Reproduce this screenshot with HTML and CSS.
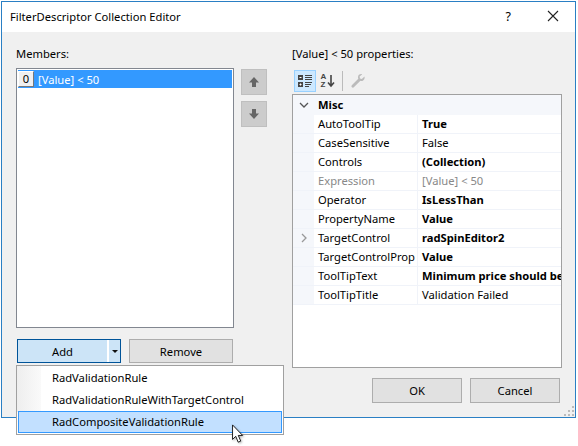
FILE: index.html
```html
<!DOCTYPE html>
<html>
<head>
  <title>FilterDescriptor Collection Editor</title>
  <link rel="stylesheet" href="styles.css">
</head>
<body>
  <div class="window">
    <div class="titlebar">
      <span class="title">FilterDescriptor Collection Editor</span>
      <span class="help">?</span>
      <svg class="close" width="12" height="12" viewBox="0 0 12 12"><path d="M1 1L11 11M11 1L1 11" stroke="#222" stroke-width="1.1" fill="none"/></svg>
    </div>
    <div class="content">
      <div class="left">
        <div class="caption">Members:</div>
        <div class="members-row">
          <div class="list">
            <div class="list-item"><span class="index">0</span><span>[Value] &lt; 50</span></div>
          </div>
          <div class="arrows">
            <button class="arrow"><svg width="12" height="12" viewBox="0 0 12 12"><path d="M6 1L11 6.5H8V11H4V6.5H1Z" fill="#666"/></svg></button>
            <button class="arrow"><svg width="12" height="12" viewBox="0 0 12 12"><path d="M4 1H8V5.5H11L6 11L1 5.5H4Z" fill="#666"/></svg></button>
          </div>
        </div>
        <div class="list-buttons">
          <div class="add-wrap">
            <button class="add">
              <span class="add-label">Add</span>
              <span class="add-split"></span>
              <span class="add-caret"></span>
            </button>
            <div class="menu">
              <div class="menu-item">RadValidationRule</div>
              <div class="menu-item">RadValidationRuleWithTargetControl</div>
              <div class="menu-item active">RadCompositeValidationRule</div>
              <svg class="cursor" width="14" height="20" viewBox="0 0 15 22"><path d="M1.5 1V17L5 13.5L7.7 20L10.5 18.8L7.8 12.6H12.6Z" fill="#fff" stroke="#111" stroke-width="1"/></svg>
            </div>
          </div>
          <button class="btn remove">Remove</button>
        </div>
      </div>
      <div class="right">
        <div class="caption">[Value] &lt; 50 properties:</div>
        <div class="toolbar">
          <span class="tool on">
            <svg width="16" height="16" viewBox="0 0 16 16">
              <rect x="1" y="2" width="5" height="5" fill="#444"/><rect x="2.5" y="4" width="2" height="1" fill="#fff"/>
              <rect x="1" y="9" width="5" height="5" fill="#444"/><rect x="2.5" y="11" width="2" height="1" fill="#fff"/><rect x="3" y="10.5" width="1" height="2" fill="#fff"/>
              <path d="M8 2.5H15M8 4.5H15M8 6.5H15M8 9.5H15M8 11.5H14M8 13.5H12" stroke="#444" stroke-width="1"/>
            </svg>
          </span>
          <span class="tool">
            <span class="az"><span>A</span><span>Z</span></span>
            <svg width="8" height="14" viewBox="0 0 8 14"><path d="M4 1V12M1 8.5L4 12L7 8.5" stroke="#444" stroke-width="1.6" fill="none"/></svg>
          </span>
          <span class="tool-sep"></span>
          <span class="tool">
            <svg width="16" height="16" viewBox="0 0 16 16"><path d="M14.5 3.5L11.8 6L10 5.5L9.6 3.6L12.2 1.2C10.2 .6 8 2 8 4.2C8 4.8 8.1 5.3 8.3 5.7L2 12C1.2 12.9 1.3 13.8 1.9 14.3C2.5 14.9 3.4 14.8 4.1 14.1L10.4 7.8C12.6 8.7 15.2 6.8 14.5 3.5Z" fill="#bbb"/></svg>
          </span>
        </div>
        <div class="grid">
          <div class="row category"><span class="gutter"><svg width="10" height="6" viewBox="0 0 10 6"><path d="M1 1L5 5L9 1" stroke="#555" stroke-width="1.3" fill="none"/></svg></span><span class="cat-name">Misc</span></div>
          <div class="row"><span class="gutter"></span><span class="name">AutoToolTip</span><span class="value bold">True</span></div>
          <div class="row"><span class="gutter"></span><span class="name">CaseSensitive</span><span class="value">False</span></div>
          <div class="row"><span class="gutter"></span><span class="name">Controls</span><span class="value bold">(Collection)</span></div>
          <div class="row disabled"><span class="gutter"></span><span class="name">Expression</span><span class="value">[Value] &lt; 50</span></div>
          <div class="row"><span class="gutter"></span><span class="name">Operator</span><span class="value bold">IsLessThan</span></div>
          <div class="row"><span class="gutter"></span><span class="name">PropertyName</span><span class="value bold">Value</span></div>
          <div class="row"><span class="gutter"><svg width="6" height="10" viewBox="0 0 6 10"><path d="M1 1L5 5L1 9" stroke="#999" stroke-width="1.3" fill="none"/></svg></span><span class="name">TargetControl</span><span class="value bold">radSpinEditor2</span></div>
          <div class="row"><span class="gutter"></span><span class="name">TargetControlProp</span><span class="value bold">Value</span></div>
          <div class="row"><span class="gutter"></span><span class="name">ToolTipText</span><span class="value bold">Minimum price should be</span></div>
          <div class="row"><span class="gutter"></span><span class="name">ToolTipTitle</span><span class="value">Validation Failed</span></div>
        </div>
        <div class="dialog-buttons">
          <button class="btn ok">OK</button>
          <button class="btn ok">Cancel</button>
        </div>
      </div>
    </div>
    <svg class="grip" width="10" height="10" viewBox="0 0 10 10"><path d="M8 0h2v2H8zM4 4h2v2H4zM8 4h2v2H8zM0 8h2v2H0zM4 8h2v2H4zM8 8h2v2H8z" fill="#bbb"/></svg>
  </div>
</body>
</html>
```

FILE: styles.css
```css
html {
  height: 100%;
}

body {
  box-sizing: border-box;
  min-height: 446px;
  margin: 0;
  padding: 1px;
  background-color: #fff;
  font-family: "Noto Sans", Arial, sans-serif;
  font-size: 11.2px;
  color: #000;
}

button {
  font-family: inherit;
  font-size: 11.2px;
  color: #000;
  padding: 0;
}

.window {
  position: relative;
  box-sizing: border-box;
  width: 575px;
  height: 417px;
  border: 1px solid #2a7fc4;
  background-color: #f0f0f0;
}

.titlebar {
  display: flex;
  align-items: center;
  height: 30px;
  padding-left: 8px;
  background-color: #fff;
}

.title {
  flex: 1;
  margin-bottom: 1px;
}

.help {
  margin-right: 36px;
  margin-bottom: 2px;
  font-size: 12.5px;
}

.close {
  margin-right: 16px;
  margin-bottom: 2px;
}

.content {
  display: flex;
  gap: 24px;
  padding: 14px 0 0 14px;
}

.left {
  width: 252px;
}

.right {
  width: 270px;
}

.caption {
  height: 16px;
  line-height: 16px;
}

.members-row {
  display: flex;
  gap: 7px;
  margin-top: 6px;
}

.list {
  box-sizing: border-box;
  width: 218px;
  height: 260px;
  padding: 1px;
  border: 1px solid #828790;
  background-color: #fff;
}

.list-item {
  display: flex;
  align-items: center;
  gap: 4px;
  height: 18px;
  background-color: #3399ff;
  color: #fff;
}

.index {
  box-sizing: border-box;
  width: 16px;
  height: 16px;
  line-height: 14px;
  text-align: center;
  background-color: #f0f0f0;
  border: 1px solid;
  border-color: #fff #777 #777 #fff;
  color: #000;
}

.arrows {
  display: flex;
  flex-direction: column;
  gap: 6px;
  margin-top: 1px;
}

.arrow {
  display: flex;
  align-items: center;
  justify-content: center;
  width: 26px;
  height: 26px;
  background-color: #cccccc;
  border: 1px solid #bfbfbf;
}

.list-buttons {
  display: flex;
  gap: 8px;
  margin-top: 11px;
  margin-left: 1px;
}

.add-wrap {
  position: relative;
}

.add {
  display: flex;
  align-items: center;
  box-sizing: border-box;
  width: 104px;
  height: 24px;
  background-color: #cce4f7;
  border: 1px solid #005499;
}

.add-label {
  flex: 1;
  text-align: center;
}

.add-split {
  width: 2px;
  height: 22px;
  background-color: #fff;
}

.add-caret {
  width: 0;
  height: 0;
  margin: 0 2px 0 3px;
  border-left: 3px solid transparent;
  border-right: 3px solid transparent;
  border-top: 3px solid #111;
}

.btn {
  box-sizing: border-box;
  background-color: #e1e1e1;
  border: 1px solid #adadad;
}

.remove {
  width: 104px;
  height: 24px;
}

.menu {
  position: absolute;
  top: 26px;
  left: -1px;
  box-sizing: border-box;
  width: 268px;
  height: 70px;
  padding: 1px;
  border: 1px solid #a0a0a0;
  background-color: #fff;
  background-image: linear-gradient(to right, #eeeeee, #fafafa 24px, #fff 24px);
  background-size: 100% 46px;
  background-repeat: no-repeat;
}

.menu-item {
  box-sizing: border-box;
  height: 22px;
  line-height: 20px;
  padding-left: 33px;
  border: 1px solid transparent;
}

.menu-item.active {
  background-color: #c2e0ff;
  border-color: #3399ff;
}

.cursor {
  position: absolute;
  top: 58px;
  left: 214px;
  filter: drop-shadow(1px 1px 1px rgba(0, 0, 0, 0.3));
}

.toolbar {
  display: flex;
  align-items: center;
  gap: 1px;
  height: 22px;
  margin-top: 8px;
  margin-left: 2px;
}

.tool {
  display: flex;
  align-items: center;
  justify-content: center;
  gap: 1px;
  width: 22px;
  height: 22px;
  box-sizing: border-box;
}

.tool.on {
  background-color: #cce8ff;
  border: 1px solid #99d1ff;
}

.tool-sep {
  width: 1px;
  height: 20px;
  margin: 0 3px 0 2px;
  background-color: #bbb;
}

.az {
  display: flex;
  flex-direction: column;
  font-family: "Liberation Sans", Arial, sans-serif;
  font-size: 8px;
  font-weight: bold;
  line-height: 8px;
  color: #444;
}

.grid {
  box-sizing: border-box;
  width: 270px;
  height: 274px;
  margin-top: 2px;
  border: 1px solid #a0a0a0;
  background-color: #fff;
  overflow: hidden;
}

.row {
  display: flex;
  height: 19px;
  line-height: 18px;
  white-space: nowrap;
  border-bottom: 1px solid #f0f3f9;
  box-sizing: border-box;
}

.gutter {
  display: flex;
  align-items: center;
  justify-content: center;
  flex: none;
  width: 21px;
  background-color: #f5f7fb;
}

.category {
  height: 20px;
  line-height: 20px;
  background-color: #f5f7fb;
  border-bottom: none;
}

.cat-name {
  padding-left: 4px;
  font-weight: bold;
}

.name {
  flex: none;
  box-sizing: border-box;
  width: 104px;
  padding-left: 4px;
  overflow: hidden;
  border-right: 1px solid #f0f3f9;
}

.value {
  padding-left: 4px;
}

.bold {
  font-weight: bold;
}

.disabled {
  color: #888;
}

.dialog-buttons {
  display: flex;
  justify-content: flex-end;
  gap: 8px;
  margin-top: 10px;
  margin-right: 2px;
}

.ok {
  width: 90px;
  height: 25px;
}

.grip {
  position: absolute;
  right: 1px;
  bottom: 1px;
}
```
